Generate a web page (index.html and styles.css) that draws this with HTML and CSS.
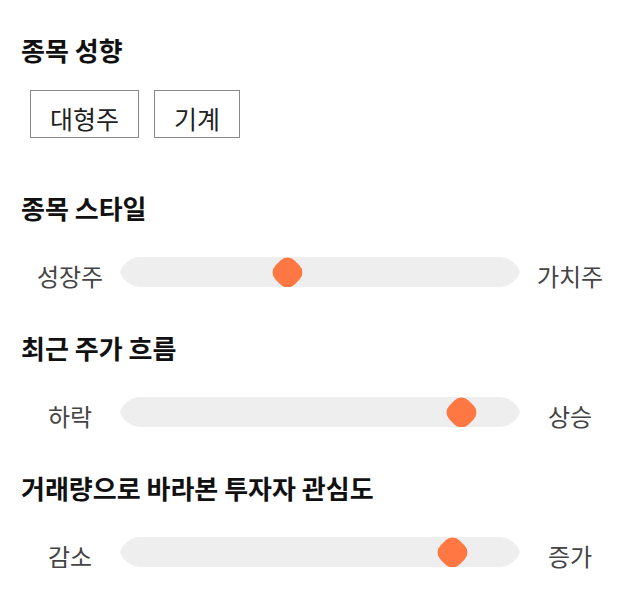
FILE: index.html
```html
<!DOCTYPE html>
<html>
<head>
  <meta charset="UTF-8">
  <title>종목 분석</title>
  <link rel="stylesheet" href="styles.css">
</head>
<body>
  <div class="panel">
    <div class="section section_tags">
      <h2 class="title">종목 성향</h2>
      <div class="tags">
        <span class="tag">대형주</span>
        <span class="tag">기계</span>
      </div>
    </div>

    <div class="section">
      <h2 class="title">종목 스타일</h2>
      <div class="scale">
        <span class="label">성장주</span>
        <div class="track">
          <span class="thumb" style="left: 41.75%;"></span>
        </div>
        <span class="label">가치주</span>
      </div>
    </div>

    <div class="section">
      <h2 class="title">최근 주가 흐름</h2>
      <div class="scale">
        <span class="label">하락</span>
        <div class="track">
          <span class="thumb" style="left: 85.25%;"></span>
        </div>
        <span class="label">상승</span>
      </div>
    </div>

    <div class="section">
      <h2 class="title">거래량으로 바라본 투자자 관심도</h2>
      <div class="scale">
        <span class="label">감소</span>
        <div class="track">
          <span class="thumb" style="left: 83%;"></span>
        </div>
        <span class="label">증가</span>
      </div>
    </div>
  </div>
</body>
</html>
```

FILE: styles.css
```css
* {
  margin: 0;
  padding: 0;
  box-sizing: border-box;
}
body {
  font-family: "Noto Sans CJK KR", "Noto Sans", sans-serif;
  color: #222;
  background: #fff;
}
.panel {
  width: 640px;
  padding: 34px 20px 0 21px;
}
.section {
  margin-bottom: 45px;
}
.section_tags {
  margin-bottom: 54px;
}
.title {
  font-size: 26px;
  line-height: 32px;
  font-weight: bold;
  color: #111;
  margin-bottom: 33px;
}
.section_tags .title {
  margin-bottom: 24px;
}
.tags {
  display: flex;
  gap: 15px;
  padding-left: 9px;
}
.tag {
  display: inline-block;
  height: 48px;
  padding: 9px 19px 0 19px;
  border: 1px solid #888;
  font-size: 25px;
  line-height: 36px;
  color: #222;
}
.scale {
  display: flex;
  align-items: center;
  height: 30px;
  margin-left: -1px;
}
.label {
  width: 100px;
  text-align: center;
  font-size: 24px;
  line-height: 30px;
  padding-top: 8px;
  color: #444;
}
.track {
  position: relative;
  width: 400px;
  height: 30px;
  background: #eee;
  clip-path: path("M 20 0 L 380 0 A 22 22 0 0 1 400 15 A 22 22 0 0 1 380 30 L 20 30 A 22 22 0 0 1 0 15 A 22 22 0 0 1 20 0 Z");
}
.thumb {
  position: absolute;
  top: 1.5px;
  width: 27px;
  height: 27px;
  margin-left: -13.5px;
  background: #ff7843;
  border-radius: 10px;
  transform: rotate(45deg);
}
```
